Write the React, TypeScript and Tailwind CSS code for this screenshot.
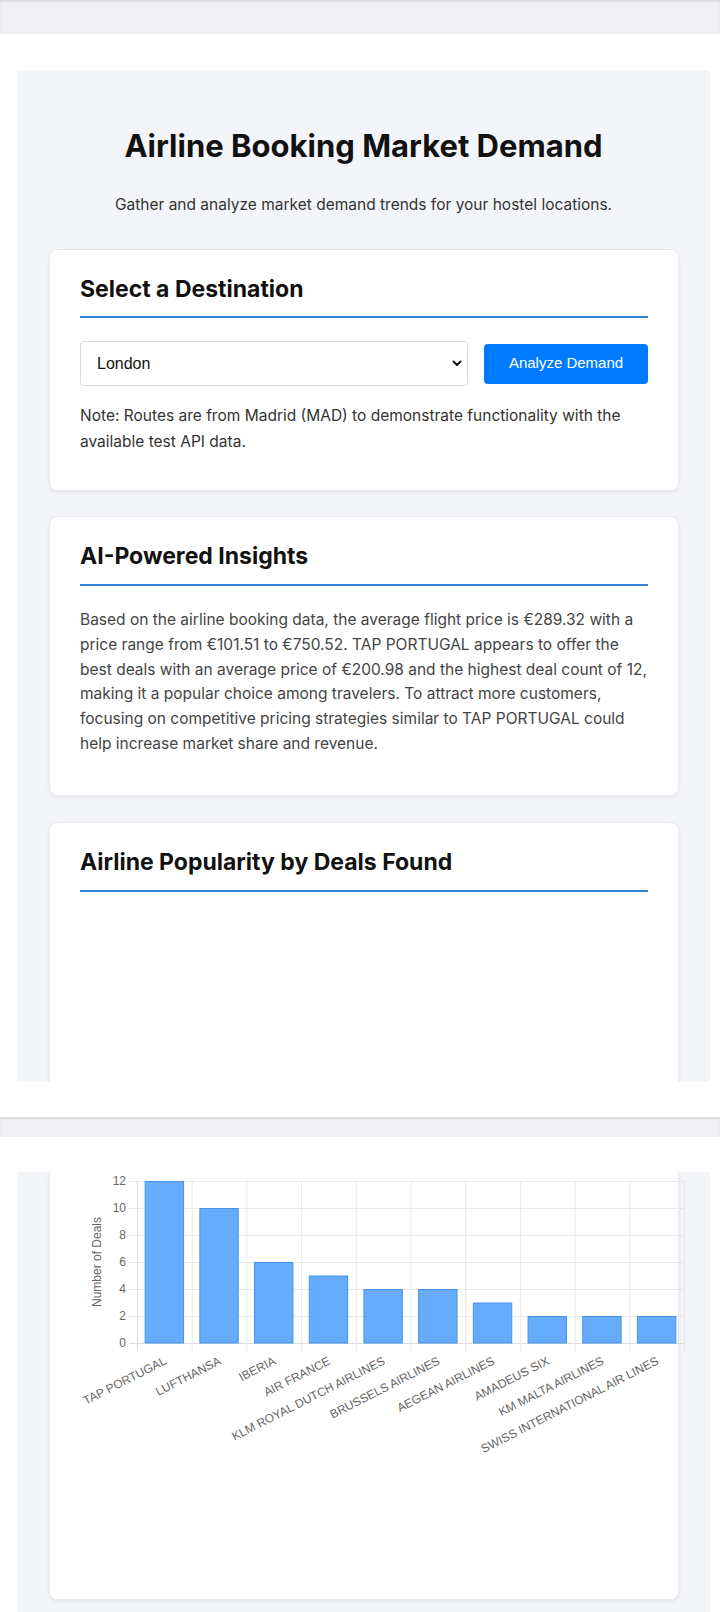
import React from "react";

const airlines = [
  { name: "TAP PORTUGAL", deals: 12 },
  { name: "LUFTHANSA", deals: 10 },
  { name: "IBERIA", deals: 6 },
  { name: "AIR FRANCE", deals: 5 },
  { name: "KLM ROYAL DUTCH AIRLINES", deals: 4 },
  { name: "BRUSSELS AIRLINES", deals: 4 },
  { name: "AEGEAN AIRLINES", deals: 3 },
  { name: "AMADEUS SIX", deals: 2 },
  { name: "KM MALTA AIRLINES", deals: 2 },
  { name: "SWISS INTERNATIONAL AIR LINES", deals: 2 },
];

// chart geometry in svg coords (svg origin sits at page x=50, y=1172)
const LEFT = 87;
const RIGHT = 634;
const TOP = 9;
const BOTTOM = 171;
const MAX = 12;
const catW = (RIGHT - LEFT) / airlines.length;
const yFor = (v: number) => BOTTOM - (v / MAX) * (BOTTOM - TOP);

function DealsChart() {
  const ticks = [0, 2, 4, 6, 8, 10, 12];
  return (
    <svg width="640" height="300" className="block overflow-visible" style={{ fontFamily: '"Liberation Sans", Arial, sans-serif' }}>
      {/* horizontal grid */}
      {ticks.map((t) => (
        <line key={t} x1={LEFT - 8} x2={RIGHT} y1={yFor(t) + 0.5} y2={yFor(t) + 0.5} stroke={t === 0 ? "#dcdcdc" : "#e8e8e8"} strokeWidth="1" />
      ))}
      {/* vertical grid */}
      {airlines.map((_, i) => (
        <line key={i} x1={LEFT + i * catW + 0.5} x2={LEFT + i * catW + 0.5} y1={TOP} y2={BOTTOM + 8} stroke={i === 0 ? "#dcdcdc" : "#e8e8e8"} strokeWidth="1" />
      ))}
      <line x1={RIGHT + 0.5} x2={RIGHT + 0.5} y1={TOP} y2={BOTTOM + 8} stroke="#e8e8e8" strokeWidth="1" />

      {/* y tick labels */}
      {ticks.map((t) => (
        <text key={t} x={LEFT - 11} y={yFor(t)} textAnchor="end" dominantBaseline="central" fontSize="12" fill="#666">
          {t}
        </text>
      ))}
      <text x={47} y={90} transform="rotate(-90 47 90)" textAnchor="middle" dominantBaseline="central" fontSize="12" fill="#666">
        Number of Deals
      </text>

      {/* bars */}
      {airlines.map((a, i) => {
        const bw = catW * 0.8 * 0.9;
        const x = LEFT + i * catW + (catW - bw) / 2;
        const y = yFor(a.deals);
        return <rect key={a.name} x={x + 0.5} y={y + 0.5} width={bw - 1} height={BOTTOM - y - 0.5} fill="#66acfa" stroke="#4393ea" strokeWidth="1" />;
      })}

      {/* x labels */}
      {airlines.map((a, i) => {
        const cx = LEFT + i * catW + catW / 2 + 1;
        const cy = BOTTOM + 17;
        return (
          <text key={a.name} x={cx} y={cy} transform={`rotate(-27 ${cx} ${cy})`} textAnchor="end" dominantBaseline="central" fontSize="12" fill="#666">
            {a.name}
          </text>
        );
      })}
    </svg>
  );
}

function CardHeading({ children, pb }: { children: React.ReactNode; pb: string }) {
  return (
    <h2 className={`text-[23px] leading-[29px] font-bold text-[#111] border-b-2 border-[#3580d8] ${pb}`}>{children}</h2>
  );
}

export default function App() {
  return (
    <div className="w-[720px] bg-white text-[#222]" style={{ fontFamily: 'Inter, "Noto Sans", sans-serif' }}>
      {/* browser chrome strip */}
      <div className="h-[34px] bg-[#efeff4] shadow-[inset_0_2px_2px_rgba(0,0,0,0.08)]" />

      {/* first screen */}
      <div className="pt-[36px] pb-[35px]">
        <div className="ml-[17px] w-[693px] h-[1012px] overflow-hidden bg-[#f3f5f8] px-[32px] pt-[57px]">
          <h1 className="text-center text-[31px] leading-[37px] font-bold text-[#111]">
            Airline Booking Market Demand
          </h1>
          <p className="mt-[29px] text-center text-[15.5px] leading-[24px] text-[#333]">
            Gather and analyze market demand trends for your hostel locations.
          </p>

          {/* destination card */}
          <div className="mt-[32px] w-[630px] rounded-[8px] border border-[#e6e8eb] bg-white px-[30px] pt-[25px] pb-[35px] shadow-[0_2px_4px_rgba(0,0,0,0.05)]">
            <CardHeading pb="pb-[12px]">Select a Destination</CardHeading>
            <div className="mt-[23px] flex items-center gap-[16px]">
              <div className="relative w-[388px]">
                <select
                  defaultValue="London"
                  className="block h-[45px] w-full appearance-none rounded-[4px] border border-[#dcdcdc] bg-white pl-[16px] text-[16px] text-[#111]"
                  style={{ fontFamily: '"Liberation Sans", Arial, sans-serif' }}
                >
                  <option>London</option>
                  <option>Paris</option>
                  <option>Rome</option>
                </select>
                <svg className="pointer-events-none absolute right-[6px] top-[19px]" width="10" height="7" viewBox="0 0 10 7">
                  <path d="M1.5 1.5 L5 5 L8.5 1.5" fill="none" stroke="#111" strokeWidth="2" strokeLinecap="round" strokeLinejoin="round" />
                </svg>
              </div>
              <button
                className="h-[40px] w-[164px] rounded-[4px] bg-[#007bff] text-[15px] text-white"
                style={{ fontFamily: '"Liberation Sans", Arial, sans-serif' }}
              >
                Analyze Demand
              </button>
            </div>
            <p className="mt-[17px] text-[15.5px] leading-[26px] text-[#333]">
              Note: Routes are from Madrid (MAD) to demonstrate functionality with the available test API data.
            </p>
          </div>

          {/* insights card */}
          <div className="mt-[25px] w-[630px] rounded-[8px] border border-[#e6e8eb] bg-white px-[30px] pt-[25px] pb-[38px] shadow-[0_2px_4px_rgba(0,0,0,0.05)]">
            <CardHeading pb="pb-[13px]">AI-Powered Insights</CardHeading>
            <p className="mt-[22px] text-[15.5px] leading-[24.8px] text-[#444]">
              Based on the airline booking data, the average flight price is €289.32 with a price range from €101.51 to
              €750.52. TAP PORTUGAL appears to offer the best deals with an average price of €200.98 and the highest deal
              count of 12, making it a popular choice among travelers. To attract more customers, focusing on competitive
              pricing strategies similar to TAP PORTUGAL could help increase market share and revenue.
            </p>
          </div>

          {/* chart card, top part */}
          <div className="mt-[26px] h-[320px] w-[630px] rounded-[8px] border border-[#e6e8eb] bg-white px-[30px] pt-[25px] shadow-[0_2px_4px_rgba(0,0,0,0.05)]">
            <CardHeading pb="pb-[13px]">Airline Popularity by Deals Found</CardHeading>
          </div>
        </div>
      </div>

      {/* second screen */}
      <div className="h-[20px] bg-[#efeff4] shadow-[inset_0_2px_2px_rgba(0,0,0,0.08)]" />
      <div className="pt-[35px]">
        <div className="ml-[17px] w-[693px] bg-[#f3f5f8] px-[32px] pb-[12px]">
          <div className="h-[428px] w-[630px] rounded-b-[8px] border border-t-0 border-[#e6e8eb] bg-white shadow-[0_2px_4px_rgba(0,0,0,0.05)]">
            <DealsChart />
          </div>
        </div>
      </div>
    </div>
  );
}
